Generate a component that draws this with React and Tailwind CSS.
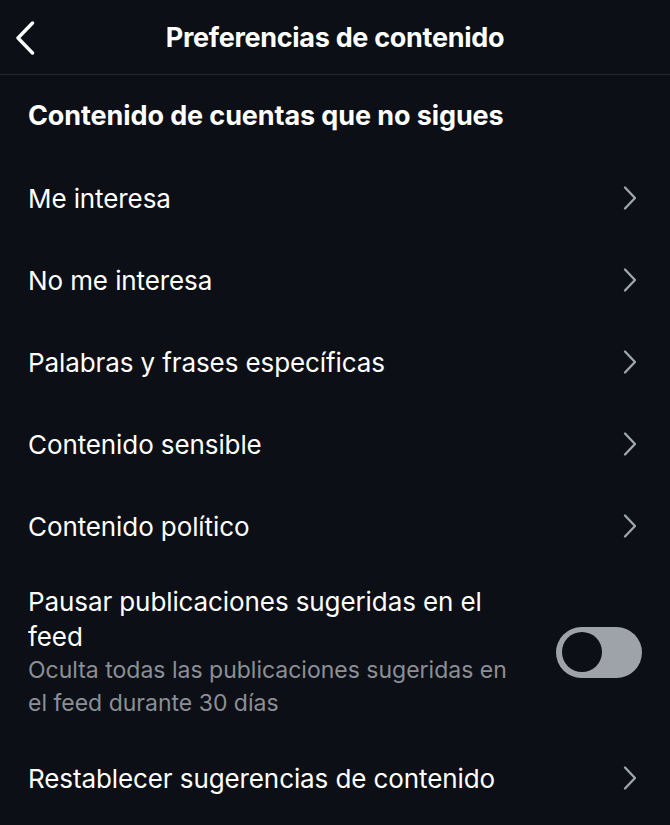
const rows = [
  "Me interesa",
  "No me interesa",
  "Palabras y frases específicas",
  "Contenido sensible",
  "Contenido político",
];

function Chevron() {
  return (
    <svg width="16" height="26" viewBox="0 0 16 26" fill="none" className="text-[#a2a6ad]">
      <path d="M3 2.5 L13 13 L3 23.5" stroke="currentColor" strokeWidth="2.3" strokeLinecap="round" strokeLinejoin="round" />
    </svg>
  );
}

function Row({ label }) {
  return (
    <div className="h-[82px] flex items-center justify-between pl-7 pr-[32px]">
      <span className="text-[26px] text-white tracking-[-0.1px]">{label}</span>
      <Chevron />
    </div>
  );
}

export default function App() {
  return (
    <div className="w-[670px] h-[825px] overflow-hidden bg-[#0c0f15] font-['Inter',sans-serif]">
      {/* Header */}
      <div className="relative h-[75px] flex items-center justify-center border-b border-[#24272d]">
        <svg width="26" height="34" viewBox="0 0 26 34" fill="none" className="absolute left-[12px] top-[21px] text-white">
          <path d="M20.5 2 L6 17 L20.5 32" stroke="currentColor" strokeWidth="3.4" strokeLinecap="round" strokeLinejoin="round" />
        </svg>
        <h1 className="text-[27px] font-bold text-white tracking-[-0.3px] pt-[2px]">Preferencias de contenido</h1>
      </div>

      <div className="h-[82px] flex items-center pl-7">
        <h2 className="text-[27px] font-bold text-white tracking-[-0.1px]">Contenido de cuentas que no sigues</h2>
      </div>

      {rows.map((r) => (
        <Row key={r} label={r} />
      ))}

      {/* Pause suggested */}
      <div className="h-[170px] flex items-center justify-between pl-7 pr-7">
        <div className="max-w-[500px]">
          <p className="text-[26px] leading-[35px] text-white tracking-[-0.1px]">
            Pausar publicaciones sugeridas en el feed
          </p>
          <p className="text-[23px] leading-[33px] text-[#8b8f97]">
            Oculta todas las publicaciones sugeridas en el feed durante 30 días
          </p>
        </div>
        <div className="w-[86px] h-[51px] rounded-full bg-[#9ea2a9] flex items-center pl-[6px]">
          <div className="w-[40px] h-[40px] rounded-full bg-[#0c0f15]" />
        </div>
      </div>

      <Row label="Restablecer sugerencias de contenido" />
    </div>
  );
}
